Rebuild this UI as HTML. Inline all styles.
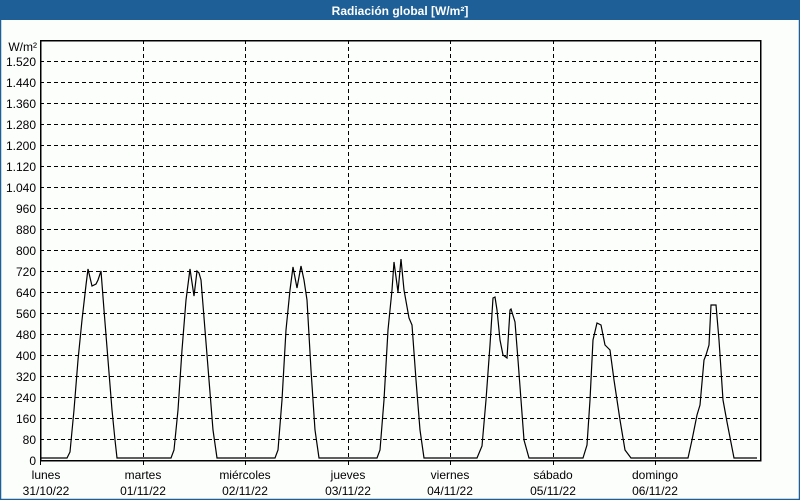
<!DOCTYPE html>
<html><head><meta charset="utf-8"><style>
html,body{margin:0;padding:0;background:#fcfefc;}
body{width:800px;height:500px;overflow:hidden;position:relative;font-family:"Liberation Sans",Tahoma,sans-serif;}
</style></head><body>
<svg width="800" height="500" viewBox="0 0 800 500" xmlns="http://www.w3.org/2000/svg" style="position:absolute;left:0;top:0">
<rect x="0" y="0" width="800" height="500" fill="#fcfefc"/>
<rect x="0.5" y="0.5" width="799" height="499" fill="none" stroke="#1d5f96" stroke-width="1.5"/>
<rect x="0" y="0" width="800" height="20" fill="#1d5f96"/>
<text x="400" y="15" font-size="12" font-weight="bold" fill="#fff" text-anchor="middle">Radiación global [W/m²]</text>
<g stroke="#000" stroke-width="1" stroke-dasharray="4,3" shape-rendering="crispEdges">
<line x1="40" y1="439.5" x2="760" y2="439.5"/><line x1="40" y1="418.5" x2="760" y2="418.5"/><line x1="40" y1="397.5" x2="760" y2="397.5"/><line x1="40" y1="376.5" x2="760" y2="376.5"/><line x1="40" y1="355.5" x2="760" y2="355.5"/><line x1="40" y1="334.5" x2="760" y2="334.5"/><line x1="40" y1="313.5" x2="760" y2="313.5"/><line x1="40" y1="292.5" x2="760" y2="292.5"/><line x1="40" y1="271.5" x2="760" y2="271.5"/><line x1="40" y1="250.5" x2="760" y2="250.5"/><line x1="40" y1="229.5" x2="760" y2="229.5"/><line x1="40" y1="208.5" x2="760" y2="208.5"/><line x1="40" y1="187.5" x2="760" y2="187.5"/><line x1="40" y1="166.5" x2="760" y2="166.5"/><line x1="40" y1="145.5" x2="760" y2="145.5"/><line x1="40" y1="124.5" x2="760" y2="124.5"/><line x1="40" y1="103.5" x2="760" y2="103.5"/><line x1="40" y1="82.5" x2="760" y2="82.5"/><line x1="40" y1="61.5" x2="760" y2="61.5"/>
<line x1="143.5" y1="40" x2="143.5" y2="460"/><line x1="245.5" y1="40" x2="245.5" y2="460"/><line x1="348.5" y1="40" x2="348.5" y2="460"/><line x1="450.5" y1="40" x2="450.5" y2="460"/><line x1="553.5" y1="40" x2="553.5" y2="460"/><line x1="655.5" y1="40" x2="655.5" y2="460"/>
</g>
<g stroke="#000" stroke-width="1" shape-rendering="crispEdges">
<line x1="40.5" y1="460" x2="40.5" y2="465"/><line x1="143.5" y1="460" x2="143.5" y2="465"/><line x1="245.5" y1="460" x2="245.5" y2="465"/><line x1="348.5" y1="460" x2="348.5" y2="465"/><line x1="450.5" y1="460" x2="450.5" y2="465"/><line x1="553.5" y1="460" x2="553.5" y2="465"/><line x1="655.5" y1="460" x2="655.5" y2="465"/>
</g>
<rect x="40.5" y="40.5" width="720" height="420" fill="none" stroke="#000" stroke-width="1.5" shape-rendering="crispEdges"/>
<polyline fill="none" stroke="#000" stroke-width="1.2" points="40,458 67,458 70,452 74,410 78,360 82,320 86,285 88,269 92,286 96,284 98,280 101,271 104,310 108,360 112,410 115,440 117,458 171,458 174,450 178,410 182,350 186,300 190,269 194,296 197,271 199,273 201,280 205,330 209,380 213,430 217,458 275,458 278,450 282,400 286,330 290,290 293,267 297,288 301,266 304,280 307,300 311,370 315,430 319,458 377,458 380,450 384,400 388,330 392,290 394,262 398,292 401,259 404,290 409,318 412,325 416,380 420,430 424,458 477,458 482,446 486,400 490,345 493,298 495,297 497,310 500,340 503,355 507,358 510,310 511,309 515,322 518,360 521,400 524,440 529,458 583,458 587,445 590,400 593,340 597,323 601,325 605,345 610,350 614,380 620,420 625,450 631,458 688,458 692,440 697,415 700,405 704,360 706,355 709,345 711,305 716,305 719,340 723,400 727,422 734,458 757,458"/>
<g font-size="12" fill="#000" text-anchor="end">
<text x="37" y="51">W/m²</text>
<text x="36" y="66">1.520</text><text x="36" y="87">1.440</text><text x="36" y="108">1.360</text><text x="36" y="129">1.280</text><text x="36" y="150">1.200</text><text x="36" y="171">1.120</text><text x="36" y="192">1.040</text><text x="36" y="213">960</text><text x="36" y="234">880</text><text x="36" y="255">800</text><text x="36" y="276">720</text><text x="36" y="297">640</text><text x="36" y="318">560</text><text x="36" y="339">480</text><text x="36" y="360">400</text><text x="36" y="381">320</text><text x="36" y="402">240</text><text x="36" y="423">160</text><text x="36" y="444">80</text><text x="36" y="465">0</text>
</g>
<g font-size="12" fill="#000" text-anchor="middle">
<text x="46" y="479">lunes</text><text x="46" y="495">31/10/22</text>
<text x="143" y="479">martes</text><text x="143" y="495">01/11/22</text>
<text x="245" y="479">miércoles</text><text x="245" y="495">02/11/22</text>
<text x="348" y="479">jueves</text><text x="348" y="495">03/11/22</text>
<text x="450" y="479">viernes</text><text x="450" y="495">04/11/22</text>
<text x="553" y="479">sábado</text><text x="553" y="495">05/11/22</text>
<text x="655" y="479">domingo</text><text x="655" y="495">06/11/22</text>
</g>
</svg>
</body></html>
